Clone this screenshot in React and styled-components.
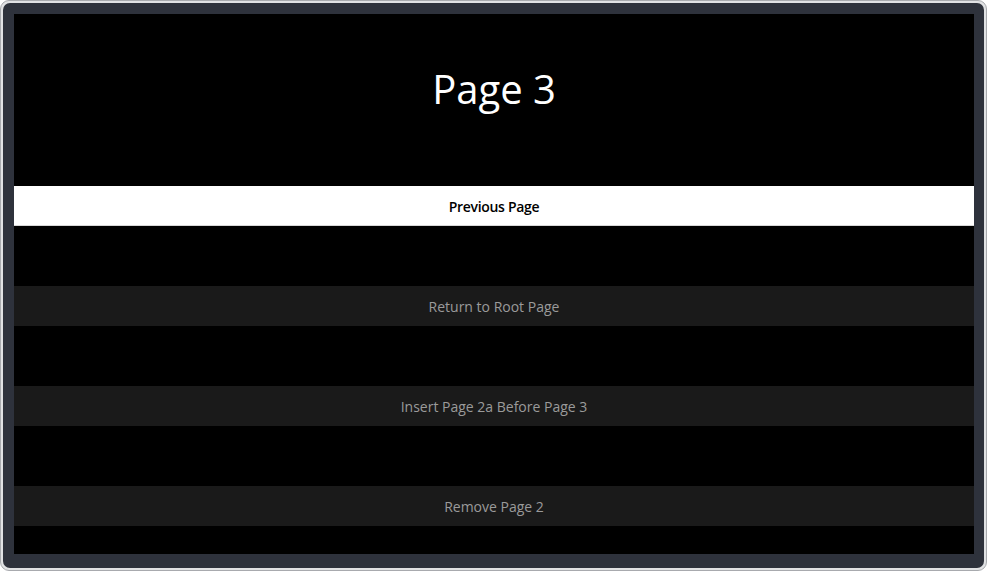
import React from "react";
import styled, { createGlobalStyle } from "styled-components";

const Global = createGlobalStyle`
  html, body { margin: 0; padding: 0; background: #ffffff; }
  body { font-family: "Open Sans", "Noto Sans", sans-serif; }
`;

const Shell = styled.div`
  box-sizing: border-box;
  width: 987px;
  height: 571px;
  padding: 2px 2px 2px 2px;
  border: 1px solid #a8aaae;
  border-radius: 9px;
  background: #e1e2e4;
`;

const Bezel = styled.div`
  box-sizing: border-box;
  height: 100%;
  border-radius: 7px;
  background: #2e323c;
  padding: 11px 10px 14px 11px;
`;

const Screen = styled.div`
  width: 960px;
  height: 540px;
  background: #000000;
  display: flex;
  flex-direction: column;
  overflow: hidden;
`;

const TitleArea = styled.div`
  height: 172px;
  box-sizing: border-box;
  padding-top: 51px;
  text-align: center;
`;

const Title = styled.h1`
  margin: 0;
  font-size: 40px;
  line-height: 48px;
  font-weight: 400;
  color: #ffffff;
`;

const List = styled.div`
  display: flex;
  flex-direction: column;
  gap: 60px;
`;

const Item = styled.div`
  height: 40px;
  display: flex;
  align-items: center;
  justify-content: center;
  font-size: 14px;
  font-weight: ${(p) => (p.$focused ? 600 : 400)};
  letter-spacing: ${(p) => (p.$focused ? "-0.3px" : "0")};
  color: ${(p) => (p.$focused ? "#000000" : "#9a9a9a")};
  background: ${(p) => (p.$focused ? "#ffffff" : "#1a1a1a")};
  box-shadow: ${(p) => (p.$focused ? "inset 0 -1px 0 #d8d8d8" : "none")};
`;

const items = [
  "Previous Page",
  "Return to Root Page",
  "Insert Page 2a Before Page 3",
  "Remove Page 2",
];

export default function App() {
  return (
    <>
      <Global />
      <Shell>
        <Bezel>
          <Screen>
            <TitleArea>
              <Title>Page 3</Title>
            </TitleArea>
            <List>
              {items.map((t, i) => (
                <Item key={t} $focused={i === 0}>
                  {t}
                </Item>
              ))}
            </List>
          </Screen>
        </Bezel>
      </Shell>
    </>
  );
}
